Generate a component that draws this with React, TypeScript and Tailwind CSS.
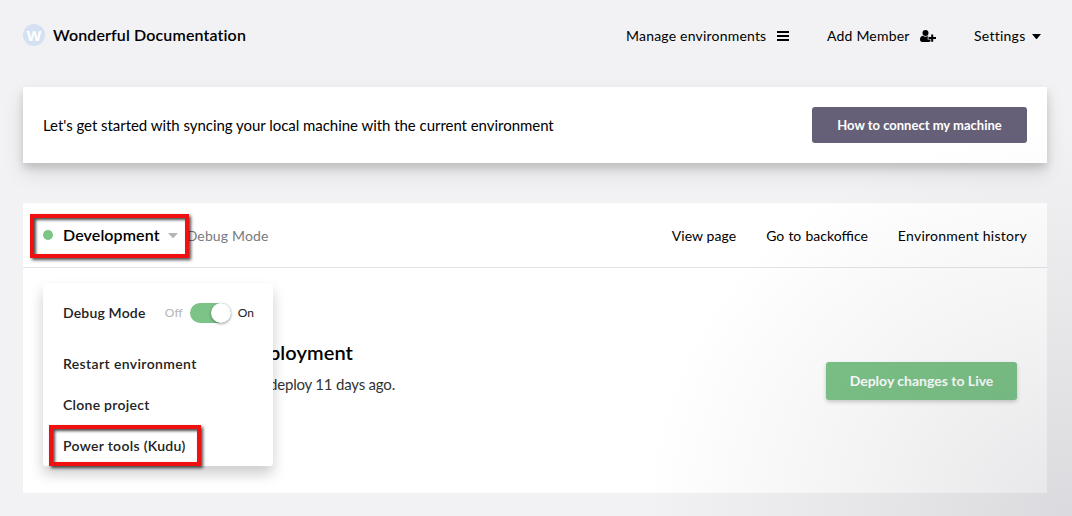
import React from "react";

const sans = "font-['Lato',sans-serif]";

function Caret({ className }: { className: string }) {
  return (
    <svg viewBox="0 0 10 5" className={className} fill="currentColor" preserveAspectRatio="none">
      <path d="M0 0H10L5.600 4.700Q5 5.200 4.400 4.700Z" />
    </svg>
  );
}

function Header() {
  return (
    <header className="flex h-[87px] items-start justify-between pt-[24px]">
      <div className="flex items-center">
        <span className="flex h-[22px] w-[22px] items-center justify-center rounded-full bg-[#d4e1f2] font-['Open_Sans',sans-serif] text-[15px] leading-none font-bold text-white">
          W
        </span>
        <h1 className="ml-[8px] text-[16px] leading-[22px] font-semibold tracking-[0.13px]">Wonderful Documentation</h1>
      </div>
      <nav className="flex items-center pt-[1px] text-[14px] leading-[22px] tracking-[0.2px]">
        <a className="flex w-[201px] items-center">
          Manage environments
          <svg viewBox="0 0 12 10" className="ml-[11px] h-[10px] w-[12px]" fill="currentColor">
            <path d="M0 0h12v2H0zM0 4h12v2H0zM0 8h12v2H0z" />
          </svg>
        </a>
        <a className="flex w-[147px] items-center">
          Add Member
          <svg viewBox="0 0 16 12" className="ml-[10px] h-[12px] w-[16px]" fill="currentColor">
            <circle cx="5.5" cy="3" r="3" />
            <path d="M2.8 5.7C.8 6 0 7.6 0 9.6 0 11.2.8 12 2.3 12h6.500c.8 0 1.300-.2 1.700-.7V9.500H7.700V6.300h1.100c-.3-.4-.5-.5-.9-.6a4 4 0 0 1-5.100 0Z" />
            <path d="M11.200 4.500h2v2.500H16v2h-2.800v2.700h-2V9H8.500V7h2.700Z" />
          </svg>
        </a>
        <a className="flex w-[75px] items-center tracking-[0.25px]">
          Settings
          <Caret className="ml-[7px] h-[5px] w-[9px]" />
        </a>
      </nav>
    </header>
  );
}

function DebugToggle() {
  return (
    <div className="flex items-center text-[12px] leading-[20px] font-normal">
      <span className="w-[25px] font-medium text-[#b9b9bd]">Off</span>
      <span className="flex h-[20px] w-[41px] justify-end rounded-full bg-[#7cc387]">
        <span className="h-[20px] w-[20px] rounded-full bg-white shadow-[0_1px_3px_rgba(0,0,0,0.4)]" />
      </span>
      <span className="ml-[7px] text-[#222]">On</span>
    </div>
  );
}

function EnvironmentMenu() {
  return (
    <div className="absolute top-[80px] left-[20px] flex h-[183px] w-[230px] flex-col rounded-[3px] bg-white pr-[19px] pl-[20px] pt-[20px] text-[14px] leading-[20px] font-semibold text-[#222] shadow-[0_8px_14px_rgba(0,0,0,0.2)]">
      <div className="mb-[31px] flex items-center justify-between">
        <span className="tracking-[0.17px]">Debug Mode</span>
        <DebugToggle />
      </div>
      <a className="mb-[21px] tracking-[0.38px]">Restart environment</a>
      <a className="mb-[21px] tracking-[0.27px]">Clone project</a>
      <a className="tracking-[0.31px]">Power tools (Kudu)</a>
    </div>
  );
}

function Highlight({ className }: { className: string }) {
  return (
    <div
      className={`pointer-events-none absolute border-4 border-[#f01010] shadow-[2px_2px_3px_rgba(0,0,0,0.7),inset_2px_2px_3px_rgba(0,0,0,0.7)] ${className}`}
    />
  );
}

export default function App() {
  return (
    <div className={`relative h-[516px] w-[1072px] overflow-hidden bg-[#f2f2f4] px-[23px] text-black ${sans}`}>
      <Header />
      <section className="flex h-[76px] w-[1024px] items-center justify-between bg-white px-[20px] shadow-[0_5px_8px_rgba(0,0,0,0.15),0_10px_20px_rgba(0,0,0,0.1)]">
        <p className="text-[15px] tracking-[-0.04px]">
          Let's get started with syncing your local machine with the current environment
        </p>
        <button className="h-[36px] w-[215px] rounded-[3px] bg-[#665f78] pt-px text-[13px] font-bold text-white">
          How to connect my machine
        </button>
      </section>
      <section className="relative mt-[40px] h-[290px] w-[1024px] bg-white">
        <div className="flex h-[65px] items-center border-b border-[#e3e5e6] px-[20px]">
          <span className="h-[10px] w-[10px] rounded-full bg-[#7cc387]" />
          <h2 className="ml-[10px] text-[16px] font-semibold tracking-[0.1px]">Development</h2>
          <Caret className="ml-[8px] h-[5px] w-[10px] text-[#b5b5b8]" />
          <span className="ml-[9px] pt-px text-[14px] tracking-[0.15px] text-[#777a80]">Debug Mode</span>
          <nav className="ml-auto flex gap-[30px] pt-px text-[14px]">
            <a className="tracking-[0.07px]">View page</a>
            <a className="[word-spacing:0.6px]">Go to backoffice</a>
            <a className="tracking-[0.25px]">Environment history</a>
          </nav>
        </div>
        <div className="flex h-[225px] items-start justify-between pr-[30px] pl-[150px]">
          <div className="w-[222px] pt-[70px] text-right whitespace-nowrap">
            <h3 className="mr-[42px] text-[20px] leading-[28px] font-semibold tracking-[0.1px]">Latest deployment</h3>
            <p className="mt-[8px] text-[15px] leading-[20px] tracking-[-0.2px] text-[#333]">
              Last deploy 11 days ago.
            </p>
          </div>
          <button className="mt-[94px] h-[38px] w-[191px] rounded-[3px] bg-[#7cc387] pb-px text-[14px] font-bold text-white shadow-[0_2px_4px_rgba(0,0,0,0.2)]">
            Deploy changes to Live
          </button>
        </div>
        <EnvironmentMenu />
        <Highlight className="top-[11px] left-[7px] h-[44px] w-[159px]" />
        <Highlight className="top-[222px] left-[26px] h-[41px] w-[152px]" />
      </section>
      <div className="pointer-events-none absolute inset-0 bg-[radial-gradient(ellipse_430px_390px_at_100%_100%,rgba(20,20,40,0.105),rgba(20,25,40,0.05)_50%,transparent)]" />
    </div>
  );
}
